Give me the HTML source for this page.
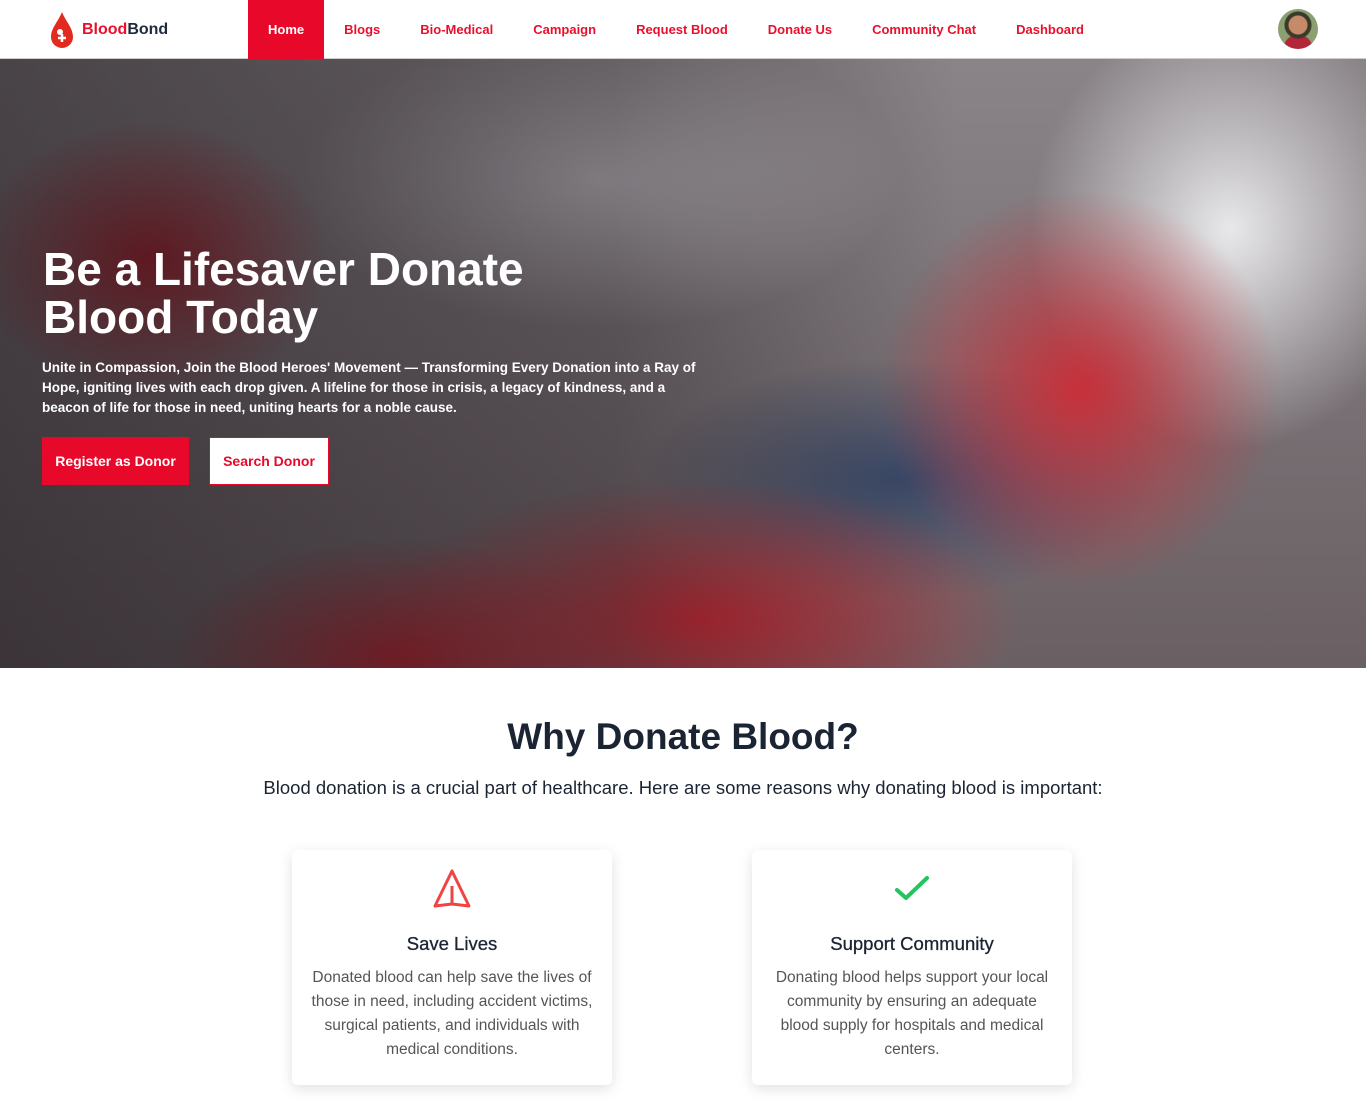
<!DOCTYPE html>
<html><head><meta charset="utf-8"><style>
*{margin:0;padding:0;box-sizing:border-box}
body{width:1366px;height:1106px;font-family:"Liberation Sans",sans-serif;background:#fff;overflow:hidden}
nav{height:59px;display:flex;align-items:center;position:relative;border-bottom:1px solid #ccc}
.logo{position:absolute;left:48px;top:10px;display:flex;align-items:center}
.logo b{font-size:16px;color:#e8102c;margin-left:6px}
.logo b span{color:#1e2a3c}
.links{position:absolute;left:248px;top:0;display:flex;height:59px}
.links a{display:flex;align-items:center;padding:0 20px;color:#e8102c;font-size:13px;text-decoration:none;font-weight:bold}
.links a.act{background:#e8092a;color:#fff}
.av{position:absolute;left:1278px;top:9px;width:40px;height:40px;border-radius:50%;background:radial-gradient(circle at 50% 40%,#c58a6a 0 9px,#3a3a2a 10px 13px,transparent 14px),radial-gradient(circle at 50% 100%,#b3263a 0 14px,#8aa070 15px);}
.hero{position:relative;height:609px;background:
linear-gradient(90deg,rgba(20,15,20,.55) 0%,rgba(20,15,20,.35) 45%,rgba(0,0,0,0) 70%),
radial-gradient(ellipse 320px 140px at 700px 560px,#c52a35,transparent),
radial-gradient(ellipse 200px 200px at 1080px 330px,#c8303a,transparent),
radial-gradient(ellipse 230px 120px at 400px 600px,#b02530,transparent),
radial-gradient(ellipse 260px 120px at 900px 420px,#3a4a6a,transparent),
radial-gradient(ellipse 180px 140px at 150px 200px,#a8222e,transparent),
radial-gradient(ellipse 200px 220px at 1230px 170px,#e8e8ea,transparent),
radial-gradient(ellipse 300px 150px at 600px 120px,#b8b4b8,transparent),
linear-gradient(180deg,#8a8488,#6a6064);}
.hero h1{position:absolute;left:43px;top:186px;font-size:46px;line-height:48px;color:#fff;font-weight:bold}
.hero p{position:absolute;left:42px;top:299px;width:670px;color:#fff;font-size:13.5px;line-height:20px;font-weight:bold}
.b1{position:absolute;left:42px;top:378px;width:147px;height:48px;background:#e8092a;color:#fff;font-size:14px;font-weight:bold;display:flex;align-items:center;justify-content:center}
.b2{position:absolute;left:209px;top:378px;width:120px;height:48px;background:#fff;color:#e8092a;border:1px solid #e8092a;font-size:14px;font-weight:bold;display:flex;align-items:center;justify-content:center}
h2{position:absolute;top:716px;width:100%;text-align:center;font-size:37px;color:#1b2433}
.sub{position:absolute;top:777px;width:100%;text-align:center;font-size:18.5px;color:#1b2433}
.card{position:absolute;top:850px;width:320px;height:235px;background:#fff;box-shadow:0 4px 14px rgba(0,0,0,.12);border-radius:6px;text-align:center}
.card h3{position:absolute;top:83px;width:100%;font-size:18.5px;color:#1b2433;font-weight:normal;-webkit-text-stroke:.3px #1b2433}
.card p{position:absolute;top:116px;left:18px;right:18px;font-size:15.5px;line-height:24px;color:#555}
.card svg{position:absolute;left:50%;top:18px;transform:translateX(-50%)}
</style></head><body>
<nav>
<div class="logo"><svg width="28" height="40" viewBox="0 0 28 40"><path d="M14 2C10 12 3 18 3 27a11 11 0 0022 0C25 18 18 12 14 2z" fill="#e22a1e"/><circle cx="12" cy="22" r="3" fill="#fff"/><path d="M10 28h8M14 24v8" stroke="#fff" stroke-width="2.5"/></svg><b>Blood<span>Bond</span></b></div>
<div class="links"><a class="act">Home</a><a>Blogs</a><a>Bio-Medical</a><a>Campaign</a><a>Request Blood</a><a>Donate Us</a><a>Community Chat</a><a>Dashboard</a></div>
<div class="av"></div>
</nav>
<div class="hero">
<h1>Be a Lifesaver Donate<br>Blood Today</h1>
<p>Unite in Compassion, Join the Blood Heroes' Movement — Transforming Every Donation into a Ray of Hope, igniting lives with each drop given. A lifeline for those in crisis, a legacy of kindness, and a beacon of life for those in need, uniting hearts for a noble cause.</p>
<div class="b1">Register as Donor</div><div class="b2">Search Donor</div>
</div>
<h2>Why Donate Blood?</h2>
<div class="sub">Blood donation is a crucial part of healthcare. Here are some reasons why donating blood is important:</div>
<div class="card" style="left:292px"><svg width="42" height="42" viewBox="0 0 42 42"><path d="M21 3L4 38L21 36L38 38Z" fill="none" stroke="#ef4444" stroke-width="3" stroke-linejoin="round"/><path d="M21 18V36" stroke="#ef4444" stroke-width="3"/></svg><h3>Save Lives</h3><p>Donated blood can help save the lives of those in need, including accident victims, surgical patients, and individuals with medical conditions.</p></div>
<div class="card" style="left:752px"><svg width="42" height="42" viewBox="0 0 42 42"><path d="M6 22l9 8L36 10" fill="none" stroke="#22c55e" stroke-width="4" stroke-linecap="round" stroke-linejoin="round"/></svg><h3>Support Community</h3><p>Donating blood helps support your local community by ensuring an adequate blood supply for hospitals and medical centers.</p></div>
</body></html>
